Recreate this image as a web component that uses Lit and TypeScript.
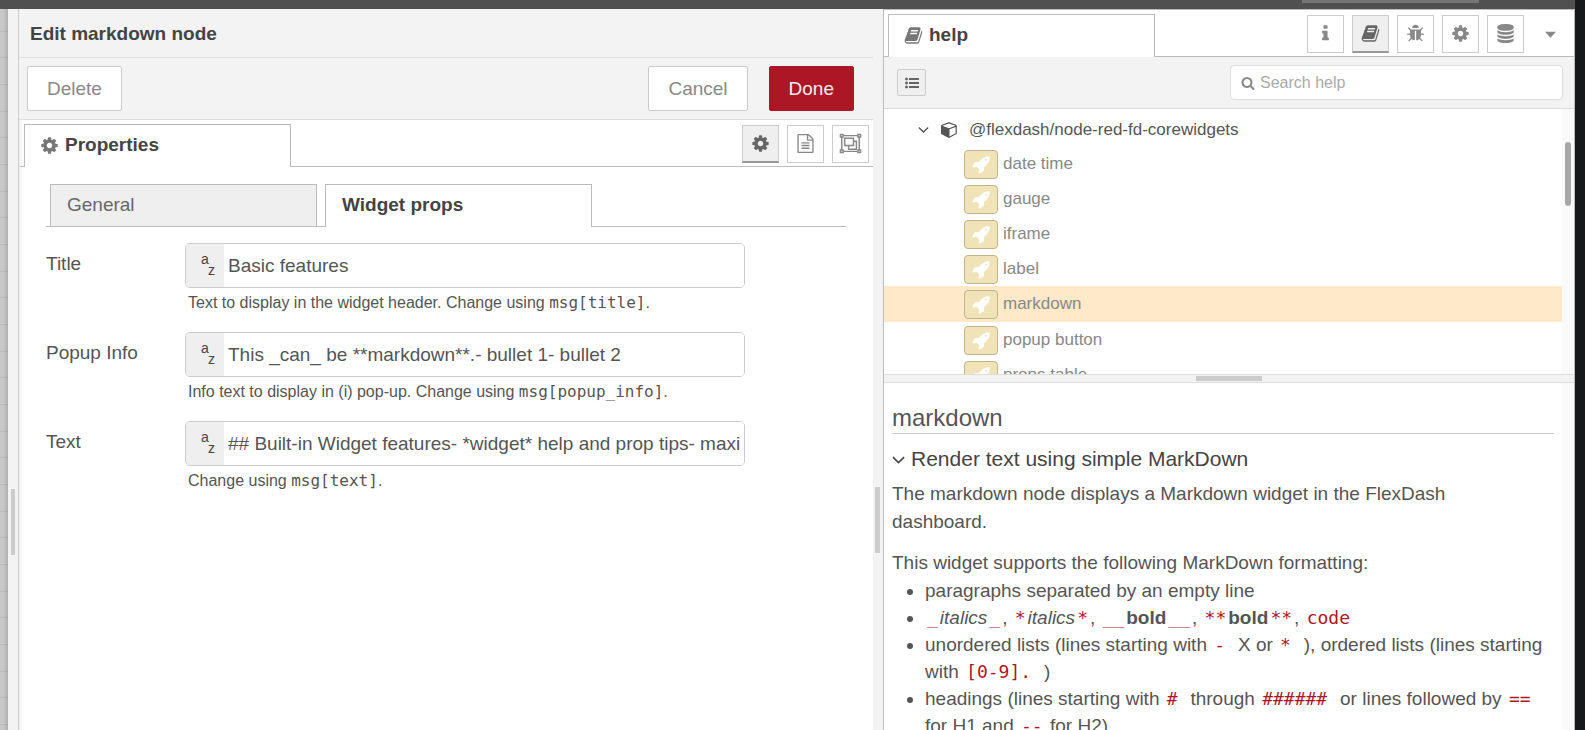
import { LitElement, html, css, svg } from "lit";
import { customElement, property, state } from "lit/decorators.js";
import { classMap } from "lit/directives/class-map.js";

const fa = (d: string) => svg`<path d=${d} fill="currentColor"></path>`;

const GLYPHS: Record<string, unknown> = {
  cog: fa("M1152 896q0-106-75-181t-181-75-181 75-75 181 75 181 181 75 181-75 75-181zm512-109v222q0 12-8 23t-20 13l-185 28q-19 54-39 91 35 50 107 138 10 12 10 25t-9 23q-27 37-99 108t-94 71q-12 0-26-9l-138-108q-44 23-91 38-16 136-29 186-7 28-36 28h-222q-14 0-24.500-8.500t-11.500-21.500l-28-184q-49-16-90-37l-141 107q-10 9-25 9-14 0-25-11-126-114-165-168-7-10-7-23 0-12 8-23 15-21 51-66.500t54-70.500q-27-50-41-99l-183-27q-13-2-21-12.500t-8-23.500v-222q0-12 8-23t19-13l186-28q14-46 39-92-40-57-107-138-10-12-10-24 0-10 9-23 26-36 98.500-107.500t94.500-71.500q13 0 26 10l138 107q44-23 91-38 16-136 29-186 7-28 36-28h222q14 0 24.500 8.500t11.500 21.500l28 184q49 16 90 37l142-107q9-9 24-9 13 0 25 10 129 119 165 170 7 8 7 22 0 12-8 23-15 21-51 66.500t-54 70.500q26 50 41 98l183 28q13 2 21 12.500t8 23.500z"),
  book: fa("M1703 478q40 57 18 129l-275 906q-19 64-76.500 107.500t-122.500 43.500h-923q-77 0-148.500-53.500t-99.500-131.500q-24-67-2-127 0-4 3-27t4-37q1-8-3-21.500t-3-19.500q2-11 8-21t16.500-23.500 16.500-23.500q23-38 45-91.500t30-91.500q3-10 .5-30t-.5-28q3-11 17-28t17-23q21-36 42-92t25-90q1-9-2.500-32t.5-28q4-13 22-30.500t22-22.500q19-26 42.500-84.500t27.500-96.500q1-8-3-25.500t-2-26.500q2-8 9-18t18-23 17-21q8-12 16.500-30.500t15-35 16-36 19.500-32 26.500-23.500 36-11.500 47.500 5.500l-1 3q38-9 51-9h761q74 0 114 56t18 130l-274 906q-36 119-71.500 153.500t-128.500 34.500h-869q-27 0-38 15-11 16-1 43 24 70 144 70h923q29 0 56-15.500t35-41.500l300-987q7-22 5-57 38 15 59 43zm-1064 2q-4 13 2 22.500t20 9.500h608q13 0 25.500-9.500t16.500-22.500l21-64q4-13-2-22.500t-20-9.500h-608q-13 0-25.500 9.500t-16.500 22.500zm-83 256q-4 13 2 22.500t20 9.500h608q13 0 25.500-9.500t16.500-22.500l21-64q4-13-2-22.500t-20-9.500h-608q-13 0-25.500 9.500t-16.500 22.500z"),
  info: fa("M1216 1344v128q0 26-19 45t-45 19h-512q-26 0-45-19t-19-45v-128q0-26 19-45t45-19h64v-384h-64q-26 0-45-19t-19-45v-128q0-26 19-45t45-19h384q26 0 45 19t19 45v576h64q26 0 45 19t19 45zm-128-1152v192q0 26-19 45t-45 19h-256q-26 0-45-19t-19-45v-192q0-26 19-45t45-19h256q26 0 45 19t19 45z"),
  bug: fa("M1696 960q0 26-19 45t-45 19h-224q0 171-67 290l208 209q19 19 19 45t-19 45q-18 19-45 19t-45-19l-198-197q-5 5-15 13t-42 28.500-65 36.500-82 29-97 13v-896h-128v896q-51 0-101.500-13.500t-87-33-66-39-43.500-32.500l-15-14-183 207q-20 21-48 21-24 0-43-16-19-18-20.500-44.500t15.500-46.500l202-227q-58-114-58-274h-224q-26 0-45-19t-19-45 19-45 45-19h224v-294l-173-173q-19-19-19-45t19-45 45-19 45 19l173 173h844l173-173q19-19 45-19t45 19 19 45-19 45l-173 173v294h224q26 0 45 19t19 45zm-480-576h-640q0-133 93.500-226.500t226.500-93.500 226.500 93.500 93.500 226.500z"),
  database: fa("M896 768q237 0 443-43t325-127v170q0 69-103 128t-280 93.500-385 34.500-385-34.500-280-93.500-103-128v-170q119 84 325 127t443 43zm0 768q237 0 443-43t325-127v170q0 69-103 128t-280 93.500-385 34.500-385-34.500-280-93.500-103-128v-170q119 84 325 127t443 43zm0-384q237 0 443-43t325-127v170q0 69-103 128t-280 93.500-385 34.500-385-34.500-280-93.500-103-128v-170q119 84 325 127t443 43zm0-1152q208 0 385 34.500t280 93.500 103 128v128q0 69-103 128t-280 93.500-385 34.500-385-34.500-280-93.500-103-128v-128q0-69 103-128t280-93.500 385-34.500z"),
  rocket: fa("M1440 448q0-40-28-68t-68-28-68 28-28 68 28 68 68 28 68-28 28-68zm224-288q0 249-75.500 430.500t-253.500 360.500q-81 80-195 176l-20 379q-2 16-16 26l-384 224q-7 4-16 4-12 0-23-9l-64-64q-13-14-8-32l85-276-281-281-276 85q-3 1-9 1-14 0-23-9l-64-64q-17-19-5-39l224-384q10-14 26-16l379-20q96-114 176-195 188-187 358-258t431-71q14 0 24 9.500t10 22.500z"),
  search: fa("M1216 832q0-185-131.500-316.500t-316.500-131.500-316.500 131.500-131.500 316.500 131.500 316.500 316.500 131.500 316.500-131.500 131.500-316.500zm512 832q0 52-38 90t-90 38q-54 0-90-38l-343-342q-179 124-399 124-143 0-273.500-55.500t-225-150-150-225-55.500-273.500 55.500-273.500 150-225 225-150 273.500-55.500 273.500 55.500 225 150 150 225 55.500 273.500q0 220-124 399l343 343q37 37 37 90z"),
  list: fa("M384 1408q0 80-56 136t-136 56-136-56-56-136 56-136 136-56 136 56 56 136zm0-512q0 80-56 136t-136 56-136-56-56-136 56-136 136-56 136 56 56 136zm1408 416v192q0 13-9.500 22.500t-22.500 9.500h-1216q-13 0-22.500-9.500t-9.500-22.500v-192q0-13 9.500-22.500t22.500-9.500h1216q13 0 22.500 9.500t9.500 22.500zm-1408-928q0 80-56 136t-136 56-136-56-56-136 56-136 136-56 136 56 56 136zm1408 416v192q0 13-9.500 22.500t-22.500 9.500h-1216q-13 0-22.500-9.500t-9.500-22.500v-192q0-13 9.500-22.500t22.500-9.500h1216q13 0 22.500 9.500t9.500 22.500zm0-512v192q0 13-9.500 22.500t-22.500 9.500h-1216q-13 0-22.500-9.500t-9.500-22.500v-192q0-13 9.500-22.500t22.500-9.500h1216q13 0 22.500 9.500t9.500 22.500z"),
  cube: fa("M896 1629l640-349v-636l-640 233v752zm-64-865l698-254-698-254-698 254zm832-252v768q0 35-18 65t-49 47l-704 384q-28 16-61 16t-61-16l-704-384q-31-17-49-47t-18-65v-768q0-40 23-73t61-47l704-256q22-8 44-8t44 8l704 256q38 14 61 47t23 73z"),
  file: fa("M1596 380q28 28 48 76t20 88v1152q0 40-28 68t-68 28h-1344q-40 0-68-28t-28-68v-1600q0-40 28-68t68-28h896q40 0 88 20t76 48zm-444-244v376h376q-10-29-22-41l-313-313q-12-12-41-22zm384 1528v-1024h-416q-40 0-68-28t-28-68v-416h-768v1536h1280zm-1024-864q0-14 9-23t23-9h704q14 0 23 9t9 23v64q0 14-9 23t-23 9h-704q-14 0-23-9t-9-23v-64zm736 224q14 0 23 9t9 23v64q0 14-9 23t-23 9h-704q-14 0-23-9t-9-23v-64q0-14 9-23t23-9h704zm0 256q14 0 23 9t9 23v64q0 14-9 23t-23 9h-704q-14 0-23-9t-9-23v-64q0-14 9-23t23-9h704z"),
  angle: svg`<path d="M130 576l766 740 766-740" fill="none" stroke="currentColor" stroke-width="220"></path>`,
  caret: svg`<path d="M0 448h1792l-896 960z" fill="currentColor"></path>`,
  group: svg`<g fill="none" stroke="currentColor" stroke-width="120" transform="translate(896 896) scale(1.15) translate(-896 -896)">
    <path d="M215 250H1577M215 1542H1577M180 215V1577M1612 215V1577"></path>
    <path d="M420 460h720v600h-720zM1160 720h220v640h-640v-300"></path>
    <g fill="#fff"><path d="M70 150h220v220h-220zM1502 150h220v220h-220zM70 1422h220v220h-220zM1502 1422h220v220h-220z"></path></g>
  </g>`,
};

@customElement("nr-icon")
class NrIcon extends LitElement {
  @property() name = "cog";
  static styles = css`
    :host { display: inline-flex; width: 19px; height: 19px; flex: none; }
    svg { width: 100%; height: 100%; display: block; overflow: visible; }
  `;
  render() {
    return html`<svg viewBox="0 0 1792 1792" aria-hidden="true">${GLYPHS[this.name]}</svg>`;
  }
}

const shared = css`
  * { box-sizing: border-box; }
  button, input { font: inherit; margin: 0; }
  .tab {
    width: 267px; height: 43px; border: 1px solid #bbb; border-bottom: 0;
    background: #fff; color: #444; font-weight: bold; text-align: left;
    display: flex; align-items: center; margin-bottom: -1px; padding: 0 16px 2px;
  }
  .tabs .tab { gap: 6px; padding: 0 15px 2px; }
  .icons { display: flex; gap: 8px; }
  .icon-btn {
    width: 37px; height: 38px; border: 1px solid #ccc; background: #fff; color: #888;
    display: flex; align-items: center; justify-content: center; padding: 0 0 2px;
  }
  .icon-btn.on { background: #efefef; color: #666; border-bottom: 2px solid #999; padding-bottom: 1px; }
`;

interface Field { id: string; label: string; value: string; hint: string; code: string; }

const FIELDS: Field[] = [
  { id: "title", label: "Title", value: "Basic features", hint: "Text to display in the widget header. Change using ", code: "msg[title]" },
  { id: "popup", label: "Popup Info", value: "This _can_ be **markdown**.- bullet 1- bullet 2", hint: "Info text to display in (i) pop-up. Change using ", code: "msg[popup_info]" },
  { id: "text", label: "Text", value: "## Built-in Widget features- *widget* help and prop tips- maxi", hint: "Change using ", code: "msg[text]" },
];

@customElement("edit-tray")
class EditTray extends LitElement {
  @state() private tab = "props";
  static styles = [shared, css`
    :host { display: flex; flex-direction: column; background: linear-gradient(90deg, #f0f0f0, #fff 5px); min-width: 0; overflow: hidden; }
    .title { background: #f3f3f3; height: 49px; border-bottom: 1px solid #ddd; padding: 2px 11px 0; display: flex; align-items: center; font-size: 19px; font-weight: bold; color: #444; margin: 0; }
    .toolbar { background: #f3f3f3; height: 62px; border-bottom: 1px solid #ddd; padding: 0 19px 0 8px; display: flex; align-items: center; gap: 21px; }
    .btn { height: 45px; padding: 0 19px; border: 1px solid #ccc; border-radius: 2px; background: #fff; color: #888; }
    .btn.push { margin-left: auto; }
    .btn.primary { background: #ad1625; border-color: #ad1625; color: #eee; }
    .tabs { display: flex; justify-content: space-between; align-items: flex-end; height: 47px; margin-left: 1px; padding: 0 4px; border-bottom: 1px solid #bbb; }
    .tabs nr-icon { color: #777; }
    .tabs .icons { margin-bottom: 3px; }
    .tabs .icon-btn nr-icon { color: inherit; }
    .body { padding: 17px 27px; }
    .subtabs { display: flex; gap: 8px; padding-left: 4px; border-bottom: 1px solid #bbb; }
    .subtabs .tab.off { background: #efefef; color: #666; font-weight: normal; height: 42px; margin: 0; }
    form { margin: 16px 0 0; display: grid; gap: 18px; }
    .field { display: grid; grid-template-columns: 139px minmax(0, 560px); }
    label { line-height: 26px; padding-top: 8px; }
    .box { display: flex; height: 45px; border: 1px solid #ccc; border-radius: 5px; overflow: hidden; }
    .type { width: 38px; background: #efefef; border: 0; padding: 7px 9px 0 15px; display: flex; flex-direction: column; font-size: 14px; color: #444; flex: none; }
    .type .a { align-self: flex-start; height: 10px; line-height: 16px; }
    .type .z { align-self: flex-end; line-height: 18px; }
    .box input { flex: 1; min-width: 0; border: 0; outline: 0; background: #fff; padding: 0 0 0 4px; color: #555; }
    .hint { margin: 3px 0 0 3px; line-height: 23px; font-size: 16px; }
    .hint code { font: 16px/23px "DejaVu Sans Mono", monospace; }
  `];
  render() {
    return html`
      <h2 class="title">Edit markdown node</h2>
      <div class="toolbar">
        <button class="btn">Delete</button>
        <button class="btn push">Cancel</button>
        <button class="btn primary">Done</button>
      </div>
      <div class="tabs">
        <button class="tab"><nr-icon name="cog"></nr-icon>Properties</button>
        <div class="icons">
          <button class="icon-btn on" aria-label="Properties"><nr-icon name="cog"></nr-icon></button>
          <button class="icon-btn" aria-label="Description"><nr-icon name="file"></nr-icon></button>
          <button class="icon-btn" aria-label="Appearance"><nr-icon name="group"></nr-icon></button>
        </div>
      </div>
      <div class="body">
        <div class="subtabs">
          <button class=${classMap({ tab: true, off: this.tab !== "general" })} @click=${() => (this.tab = "general")}>General</button>
          <button class=${classMap({ tab: true, off: this.tab !== "props" })} @click=${() => (this.tab = "props")}>Widget props</button>
        </div>
        <form>
          ${FIELDS.map((f) => html`
            <div class="field">
              <label for=${f.id}>${f.label}</label>
              <div>
                <div class="box">
                  <button class="type" type="button"><span class="a">a</span><span class="z">z</span></button>
                  <input id=${f.id} type="text" .value=${f.value}>
                </div>
                <p class="hint">${f.hint}<code>${f.code}</code>.</p>
              </div>
            </div>`)}
        </form>
      </div>`;
  }
}

const NODES = ["date time", "gauge", "iframe", "label", "markdown", "popup button", "props table"];

@customElement("help-sidebar")
class HelpSidebar extends LitElement {
  @state() private selected = "markdown";
  static styles = [shared, css`
    :host { display: flex; flex-direction: column; background: #fff; border: 1px solid #bbb; border-width: 1px 1px 0 0; min-width: 0; overflow: hidden; }
    .tabs { display: flex; height: 47px; flex: none; border-bottom: 1px solid #bbb; align-items: flex-end; padding: 0 4px; }
    .tabs .tab nr-icon { color: #777; }
    .tabs .icons { margin: 0 0 3px auto; }
    .more { border: 0; background: none; color: #888; width: 46px; padding: 0 0 0 7px; height: 44px; display: flex; align-items: center; justify-content: center; }
    .more nr-icon { width: 11px; height: 11px; }
    .bar { background: #f3f3f3; height: 52px; flex: none; border-bottom: 1px solid #ddd; display: flex; align-items: center; justify-content: space-between; padding: 0 11px 0 13px; }
    .toc { width: 29px; height: 27px; border: 1px solid #ccc; border-radius: 2px; background: #efefef; color: #666; padding: 0; display: flex; align-items: center; justify-content: center; }
    .toc nr-icon { width: 14px; height: 14px; }
    .search { width: 333px; height: 35px; border: 1px solid #ddd; border-radius: 4px; background: #fff; display: flex; align-items: center; gap: 5px; padding: 0 10px; color: #888; }
    .search nr-icon { width: 14px; height: 14px; }
    .search input { flex: 1; min-width: 0; border: 0; outline: 0; font-size: 16px; padding: 0; color: #555; }
    .search input::placeholder { color: #aaa; opacity: 1; }
    .tree { height: 265px; flex: none; display: flex; overflow: hidden; font-size: 17px; }
    .rows { flex: 1; min-width: 0; }
    .pkg { display: flex; align-items: center; height: 37px; padding: 4px 0 0 34px; color: #555; }
    .pkg .angle { width: 11px; height: 11px; margin-right: 12px; }
    .pkg .cube { width: 17px; height: 17px; margin-right: 11px; }
    .node { display: flex; align-items: center; gap: 5px; width: 100%; height: 35px; border: 0; background: #fff; padding: 0 0 0 80px; color: #888; text-align: left; font-size: 17px; }
    .node.on { background: #ffe9c8; height: 36px; }
    .swatch { width: 34px; height: 29px; border: 1px solid #c1b48a; border-radius: 4px; background: #f1e3b8; color: #fff; display: flex; align-items: center; justify-content: center; margin-top: 1px; }
    .swatch nr-icon { width: 19px; height: 19px; }
    .track { width: 12px; background: #fafafa; padding: 33px 3px 0; flex: none; }
    .thumb { height: 64px; border-radius: 3px; background: #a8a8a8; }
    .split { height: 9px; flex: none; background: #f3f3f3; border: 1px solid #ddd; border-width: 1px 0; display: flex; align-items: center; justify-content: center; }
    .grip { width: 66px; height: 5px; background: #ccc; }
    .lower { flex: 1; min-height: 0; display: flex; }
    .help { flex: 1; min-width: 0; overflow: hidden; padding: 19px 8px 0; line-height: 28px; }
    h1 { font-size: 24px; line-height: 31px; font-weight: normal; margin: 0 0 9px; border-bottom: 1px solid #ccc; color: #555; }
    h3 { font-size: 21px; line-height: 32px; font-weight: normal; margin: 0 0 5px; color: #444; display: flex; align-items: center; gap: 6px; }
    h3 nr-icon { width: 13px; height: 13px; }
    p { margin: 0 0 13px; padding-right: 16px; }
    p.lead { margin: 0; }
    ul { margin: 0; padding-left: 33px; line-height: 27px; }
    .help code { font: 18px/20px "DejaVu Sans Mono", monospace; color: #ad1625; padding: 0 2px; white-space: pre-wrap; }
  `];
  render() {
    const c = (t: string) => html`<code>${t}</code>`;
    return html`
      <div class="tabs">
        <button class="tab"><nr-icon name="book"></nr-icon>help</button>
        <div class="icons">
          <button class="icon-btn" aria-label="Information"><nr-icon name="info"></nr-icon></button>
          <button class="icon-btn on" aria-label="Help"><nr-icon name="book"></nr-icon></button>
          <button class="icon-btn" aria-label="Debug"><nr-icon name="bug"></nr-icon></button>
          <button class="icon-btn" aria-label="Configuration nodes"><nr-icon name="cog"></nr-icon></button>
          <button class="icon-btn" aria-label="Context data"><nr-icon name="database"></nr-icon></button>
        </div>
        <button class="more" aria-label="More"><nr-icon name="caret"></nr-icon></button>
      </div>
      <div class="bar">
        <button class="toc" aria-label="Table of contents"><nr-icon name="list"></nr-icon></button>
        <label class="search"><nr-icon name="search"></nr-icon><input type="text" placeholder="Search help" aria-label="Search help"></label>
      </div>
      <div class="tree">
        <div class="rows">
          <div class="pkg"><nr-icon class="angle" name="angle"></nr-icon><nr-icon class="cube" name="cube"></nr-icon>@flexdash/node-red-fd-corewidgets</div>
          ${NODES.map((n) => html`
            <button class=${classMap({ node: true, on: n === this.selected })} @click=${() => (this.selected = n)}>
              <span class="swatch"><nr-icon name="rocket"></nr-icon></span>${n}
            </button>`)}
        </div>
        <div class="track"><div class="thumb"></div></div>
      </div>
      <div class="split"><div class="grip"></div></div>
      <div class="lower">
        <article class="help">
          <h1>markdown</h1>
          <h3><nr-icon name="angle"></nr-icon>Render text using simple MarkDown</h3>
          <p>The markdown node displays a Markdown widget in the FlexDash dashboard.</p>
          <p class="lead">This widget supports the following MarkDown formatting:</p>
          <ul>
            <li>paragraphs separated by an empty line</li>
            <li>${c("_")}<em>italics</em>${c("_")}, ${c("*")}<em>italics</em>${c("*")}, ${c("__")}<b>bold</b>${c("__")}, ${c("**")}<b>bold</b>${c("**")}, ${c("code")}</li>
            <li>unordered lists (lines starting with ${c("- ")}X or ${c("* ")}), ordered lists (lines starting with ${c("[0-9]. ")})</li>
            <li>headings (lines starting with ${c("# ")}through ${c("###### ")}or lines followed by ${c("==")} for H1 and ${c("--")} for H2)</li>
          </ul>
        </article>
        <div class="track"></div>
      </div>`;
  }
}

@customElement("app-root")
class AppRoot extends LitElement {
  static styles = css`
    * { box-sizing: border-box; }
    :host { display: flex; height: 100vh; overflow: hidden; font: 19px "Liberation Sans", Arial, sans-serif; color: #555; background: #fff; }
    .app { flex: 1; min-width: 0; display: flex; flex-direction: column; }
    .header { height: 9px; flex: none; background: #505050; display: flex; justify-content: flex-end; padding-right: 96px; }
    .deploy { width: 177px; height: 3px; background: #757575; }
    .main { flex: 1; min-height: 0; display: grid; grid-template-columns: 8px 11px minmax(0, 854px) 11px minmax(0, 1fr); }
    .canvas { background: linear-gradient(90deg, rgba(0,0,0,0) 40%, rgba(0,0,0,.12)), linear-gradient(transparent 22px, #bbb 22px 23px, transparent 23px 48px, #bbb 48px 49px, transparent 49px 75px, #bbb 75px 76px, transparent 76px) 0 0 / 8px 80px, #c8c8c8; }
    .sep { background: #f3f3f3; border-right: 1px solid #bbb; padding: 480px 3px 0 2px; }
    .sep.first { border-color: #ccc; }
    .sep.right { padding-top: 478px; }
    .grip { width: 5px; height: 66px; background: #ccc; }
    .first .grip { width: 4px; margin-left: 1px; }
    .edge { width: 10px; flex: none; background: #15191c; }
  `;
  render() {
    return html`
      <div class="app">
        <div class="header"><div class="deploy"></div></div>
        <div class="main">
          <div class="canvas"></div>
          <div class="sep first"><div class="grip"></div></div>
          <edit-tray></edit-tray>
          <div class="sep right"><div class="grip"></div></div>
          <help-sidebar></help-sidebar>
        </div>
      </div>
      <div class="edge"></div>`;
  }
}
